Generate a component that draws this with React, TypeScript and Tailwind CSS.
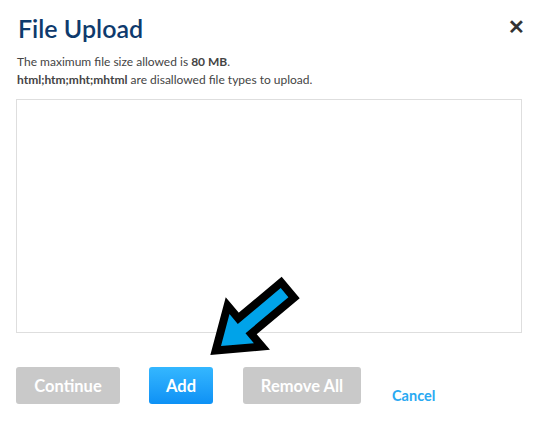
import React from "react";

function Arrow() {
  // local arrow pointing +x, tip at origin
  const W = 19, H = 27, s = 6, Len = 83;
  const pts = [
    [0, 0], [-H, -W], [-H, -s], [-Len, -s], [-Len, s], [-H, s], [-H, W],
  ];
  const a = (140 * Math.PI) / 180;
  const tx = 221, ty = 346;
  const p = pts
    .map(([x, y]) => {
      const X = x * Math.cos(a) - y * Math.sin(a) + tx;
      const Y = x * Math.sin(a) + y * Math.cos(a) + ty;
      return `${X.toFixed(1)},${Y.toFixed(1)}`;
    })
    .join(" ");
  return (
    <svg className="absolute left-0 top-0 pointer-events-none" width={539} height={423}>
      <polygon points={p} fill="#00a3e9" stroke="#000" strokeWidth={16} strokeLinejoin="miter" strokeMiterlimit={4} paintOrder="stroke" />
    </svg>
  );
}

export default function App() {
  return (
    <div className="relative w-[539px] h-[423px] bg-white overflow-hidden" style={{ fontFamily: "Lato, 'Open Sans', sans-serif" }}>
      <div className="flex items-start justify-between pl-[18px] pr-[14px] pt-[12px]">
        <h1 className="text-[25px] leading-[32px] font-semibold text-[#0e3a6d]">File Upload</h1>
        <span className="text-[#333] font-bold text-[20px] leading-[20px] mt-[4px]">✕</span>
      </div>
      <div className="pl-[17px] mt-[9px] text-[12px] leading-[18px] text-[#444]">
        <p>The maximum file size allowed is <b>80 MB</b>.</p>
        <p><b>html;htm;mht;mhtml</b> are disallowed file types to upload.</p>
      </div>
      <div className="ml-[16px] mt-[10px] w-[506px] h-[234px] border border-[#dedede]" />
      <div className="flex items-center pl-[16px] mt-[32px]">
        <button className="w-[104px] h-[37px] rounded-[3px] bg-[#c9c9c9] text-white font-bold text-[16.5px]">Continue</button>
        <button className="ml-[29px] w-[64px] h-[37px] rounded-[3px] bg-gradient-to-b from-[#34b7ff] to-[#0d91f5] text-white font-bold text-[16.5px]">Add</button>
        <button className="ml-[30px] w-[118px] h-[37px] rounded-[3px] bg-[#c9c9c9] text-white font-bold text-[16.5px]">Remove All</button>
        <span className="ml-[31px] mt-[20px] text-[14.5px] font-bold text-[#2aa9f2]">Cancel</span>
      </div>
      <Arrow />
    </div>
  );
}
